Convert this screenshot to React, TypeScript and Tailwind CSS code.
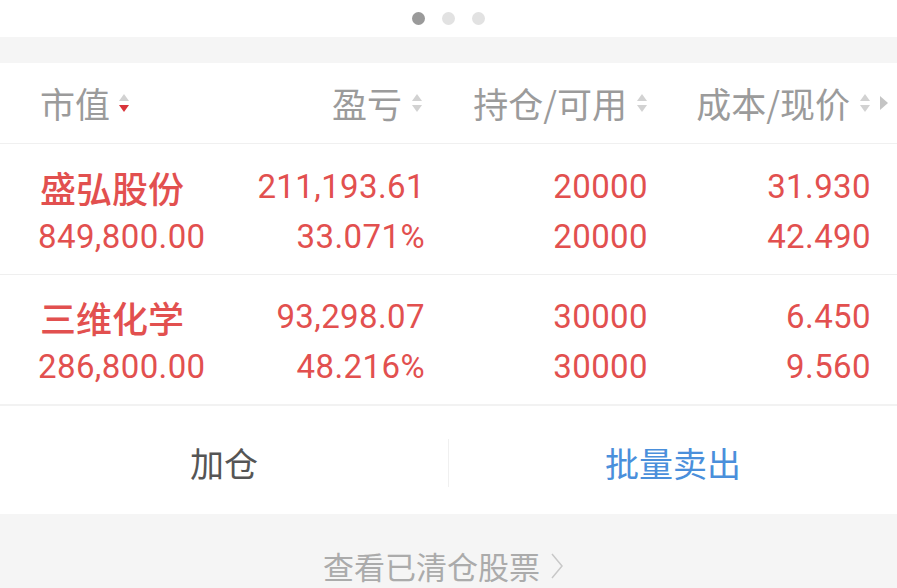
import React from 'react';

const RED = 'text-[#e2504f]';

type Row = { name: string; value: string; pl: string; plPct: string; hold: string; avail: string; cost: string; price: string };

const ROWS: Row[] = [
  { name: '盛弘股份', value: '849,800.00', pl: '211,193.61', plPct: '33.071%', hold: '20000', avail: '20000', cost: '31.930', price: '42.490' },
  { name: '三维化学', value: '286,800.00', pl: '93,298.07', plPct: '48.216%', hold: '30000', avail: '30000', cost: '6.450', price: '9.560' },
];

function SortIcon({ active }: { active?: boolean }) {
  return (
    <svg width="12" height="24" viewBox="0 0 12 24" className="shrink-0">
      <path d="M6 3 L11 10 L1 10 Z" fill="#d2d2d2" />
      <path d="M1 14 L11 14 L6 21 Z" fill={active ? '#d9343a' : '#d2d2d2'} />
    </svg>
  );
}

const cjk = { fontFamily: '"Noto Sans CJK SC", "Noto Sans", sans-serif' };
const num = { fontFamily: 'Roboto, "Noto Sans CJK SC", sans-serif' };

export default function App() {
  return (
    <div className="w-[897px] h-[588px] overflow-hidden bg-[#f5f5f5]" style={cjk}>
      {/* pager dots */}
      <div className="h-[37px] bg-white flex items-center justify-center gap-[17px]">
        <span className="w-[13px] h-[13px] rounded-full bg-[#9a9a9a]" />
        <span className="w-[13px] h-[13px] rounded-full bg-[#e2e2e2]" />
        <span className="w-[13px] h-[13px] rounded-full bg-[#e2e2e2]" />
      </div>

      <div className="h-[26px]" />

      {/* header */}
      <div className="h-[81px] bg-white border-b border-[#f0f0f0] pl-[40px] pr-[26px] grid grid-cols-[160px_223px_225px_223px] items-center text-[35px] text-[#9b9b9b]">
        <div className="flex items-center gap-[8px]">
          <span>市值</span>
          <SortIcon active />
        </div>
        <div className="flex items-center justify-end gap-[9px]">
          <span>盈亏</span>
          <SortIcon />
        </div>
        <div className="flex items-center justify-end gap-[9px]">
          <span>持仓/可用</span>
          <SortIcon />
        </div>
        <div className="flex items-center justify-end gap-[9px] relative">
          <span>成本/现价</span>
          <SortIcon />
          <svg width="9" height="14" viewBox="0 0 9 14" className="absolute -right-[17px] top-1/2 -translate-y-1/2">
            <path d="M1 0 L9 7 L1 14 Z" fill="#c4c4c4" />
          </svg>
        </div>
      </div>

      {/* rows */}
      {ROWS.map((r, i) => (
        <div
          key={r.name}
          className={`h-[131px] bg-white pl-[38px] pr-[26px] pt-[5px] grid grid-cols-[164px_223px_223px_223px] content-center leading-[50px] ${RED} ${i === 0 ? 'border-b border-[#efefef]' : 'border-b-2 border-[#f2f2f2]'}`}
        >
          <div className="flex flex-col">
            <span className="text-[36px] font-medium pl-[2px] whitespace-nowrap">{r.name}</span>
            <span className="text-[33px] tracking-[0.4px] whitespace-nowrap" style={num}>{r.value}</span>
          </div>
          <div className="flex flex-col items-end text-[33px] tracking-[0.4px]" style={num}>
            <span>{r.pl}</span>
            <span>{r.plPct}</span>
          </div>
          <div className="flex flex-col items-end text-[33px] tracking-[0.4px]" style={num}>
            <span>{r.hold}</span>
            <span>{r.avail}</span>
          </div>
          <div className="flex flex-col items-end text-[33px] tracking-[0.4px]" style={num}>
            <span>{r.cost}</span>
            <span>{r.price}</span>
          </div>
        </div>
      ))}

      {/* actions */}
      <div className="h-[108px] bg-white flex items-center text-[34px] pt-[5px]">
        <button className="flex-1 h-full flex items-center justify-center text-[#555555]">加仓</button>
        <div className="w-px h-[48px] bg-[#f0f0f0]" />
        <button className="flex-1 h-full flex items-center justify-center text-[#4a8fdb]">批量卖出</button>
      </div>

      {/* footer */}
      <div className="pt-[36px] pr-[10px] flex items-center justify-center gap-[10px] text-[31px] leading-[32px] text-[#ababab]">
        <span>查看已清仓股票</span>
        <svg width="14" height="28" viewBox="0 0 14 28">
          <path d="M2 2 L12 14 L2 26" fill="none" stroke="#c8c8c8" strokeWidth="1.5" />
        </svg>
      </div>
    </div>
  );
}
